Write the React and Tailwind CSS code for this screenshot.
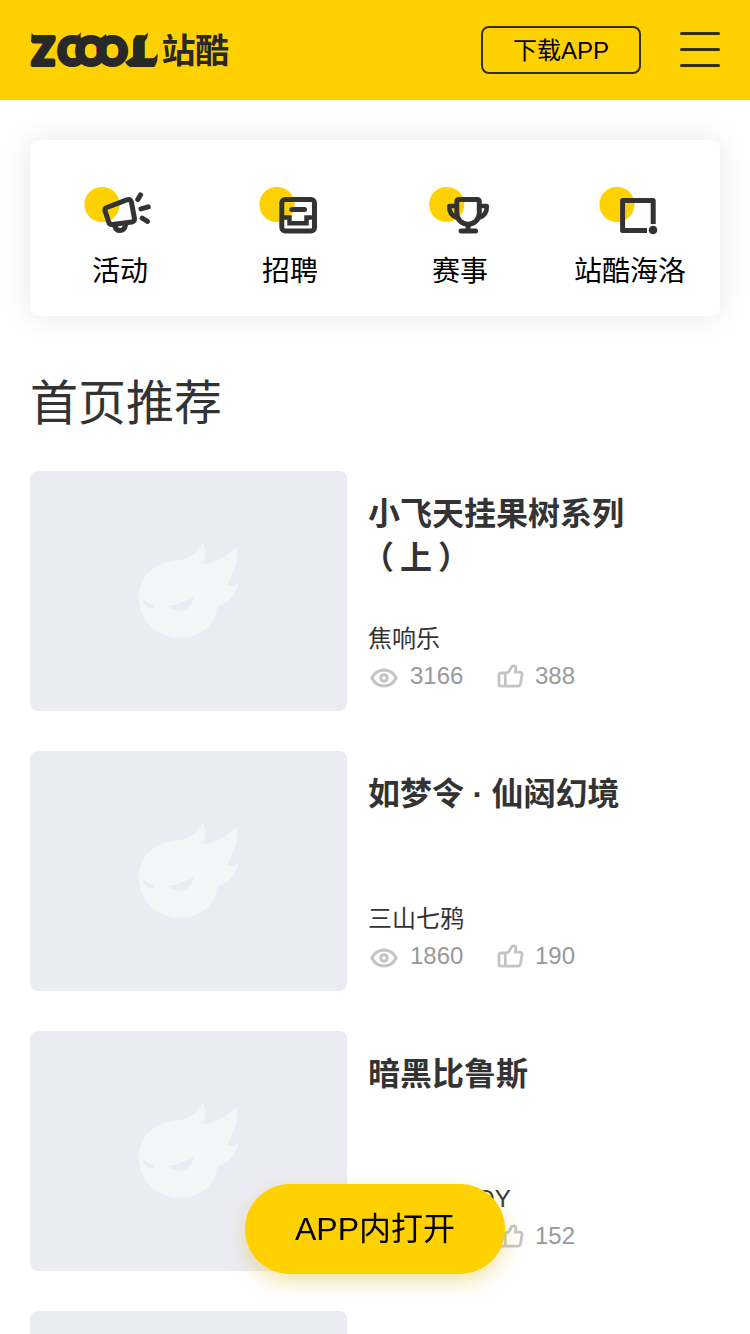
const navItems = [
    { name: '活动', icon: ActivityIcon },
    { name: '招聘', icon: JobsIcon },
    { name: '赛事', icon: TrophyIcon },
    { name: '站酷海洛', icon: HelloRfIcon },
]

const works = [
    { id: 1, title: '小飞天挂果树系列', suffix: '上', author: '焦响乐', views: 3166, likes: 388 },
    { id: 2, title: '如梦令 · 仙闼幻境', author: '三山七鸦', views: 1860, likes: 190 },
    { id: 3, title: '暗黑比鲁斯', author: 'BLACK_BOY', views: 1204, likes: 152 },
    { id: 4, title: '', author: '', views: 0, likes: 0 },
]

function Logo() {
    return (
        <svg className="w-[200px] h-10 overflow-visible" viewBox="30 30 200 40" fill="#282828" role="img" aria-label="ZCOOL 站酷">
            <text
                x="43.3 70 90.8 112.3 144"
                y="65"
                fontFamily="Lato, sans-serif"
                fontWeight="900"
                fontSize="37"
                textAnchor="middle"
                stroke="#282828"
                strokeWidth="4"
                strokeLinejoin="round"
            >
                ZCOOL
            </text>
            {/* little horns on the letters */}
            <path d="M31 42 L31.7 32.5 Q33 36.5 39 37 L39 41Z M70 36.5 Q78.5 37 80.7 32.3 Q81.5 38 77 43.5Z M98 39 Q103 37 106 34 L107 38 L101 42Z M133 42 Q133 36.5 138 36.5 Q145.5 37 147.7 32.3 Q148.5 39 144 41.5 L143 50 L133 60Z M148 59.5 Q156 58.5 157.5 53 Q158.5 62 154 67 L130 67 Q127 66 125 62 L134 56Z" />
            <text x="161.5 195" y="63" fontSize="34" fontWeight="700" fontFamily="'Noto Sans CJK SC', sans-serif">站酷</text>
        </svg>
    )
}

function ActivityIcon() {
    return (
        <svg className="w-20 h-[60px]" viewBox="0 0 80 60" fill="none" stroke="#333" strokeWidth="5" strokeLinecap="round" strokeLinejoin="round">
            <circle cx="22" cy="24.5" r="17.6" fill="#ffd100" stroke="none" />
            <path d="M26.8 27.5 L46.8 19.8 Q50.3 18.7 51.4 22 L54.4 38 Q55 41.4 51.8 42 L32.5 44.5 Q29.5 44.8 28.7 42 L25.1 31 Q24.4 28.5 26.8 27.5Z" />
            <path d="M34.8 46 Q36 50.5 40 50.5 Q44.5 50.5 45.7 44.5" />
            <path d="M57.8 19.6 L60.6 14.8 M61 28.9 L68.3 26.9 M62.2 38.2 L67.4 41.4" />
        </svg>
    )
}

function JobsIcon() {
    return (
        <svg className="w-20 h-[60px]" viewBox="0 0 80 60" fill="none" stroke="#333" strokeWidth="5" strokeLinecap="round" strokeLinejoin="round">
            <circle cx="27" cy="24.5" r="17.6" fill="#ffd100" stroke="none" />
            <rect x="31.8" y="19.6" width="32.7" height="31.4" rx="3.5" />
            <path d="M41.8 29.4 H54.5" />
            <path d="M33 37.5 H39.5 V43.3 H56.5 V37.5 H63" strokeWidth="4.5" strokeLinejoin="miter" />
        </svg>
    )
}

function TrophyIcon() {
    return (
        <svg className="w-20 h-[60px]" viewBox="0 0 80 60" fill="none" stroke="#333" strokeWidth="5" strokeLinecap="round" strokeLinejoin="round">
            <circle cx="26.7" cy="24.5" r="17.6" fill="#ffd100" stroke="none" />
            <g transform="translate(-6.7 0)">
                <path d="M43.5 22 Q43.5 19.5 46 19.5 H63.5 Q66 19.5 66 22 V33 C66 39.5 61 44.3 54.8 44.3 C48.5 44.3 43.5 39.5 43.5 33Z" />
                <path d="M42 26 H36 Q35.5 35 44 38 M67.5 26 H73.5 Q74 35 65.5 38" strokeWidth="4.5" />
                <path d="M54.8 45 V50 M47.8 51 H62.3" />
            </g>
        </svg>
    )
}

function HelloRfIcon() {
    return (
        <svg className="w-20 h-[60px]" viewBox="0 0 80 60" fill="none" stroke="#333" strokeWidth="5" strokeLinejoin="round">
            <circle cx="27" cy="24.5" r="17.6" fill="#ffd100" stroke="none" />
            <path d="M57 50.6 H32.6 V20.5 H63.2 V44" />
            <circle cx="63" cy="50" r="4.3" fill="#333" stroke="none" />
        </svg>
    )
}

function FlameIcon() {
    return (
        <svg className="w-[102px] h-[97px]" viewBox="55 40 306 291">
            <path
                fill="#f4f5f7"
                d="M57 205 C57 142 105 98 185 93 C220 86 239 62 250 41 C261 60 260 84 250 107 C292 101 325 83 353 53 C356 95 344 136 320 170 C334 173 345 171 357 164 C350 198 329 222 294 231 C286 292 242 327 181 327 C108 327 57 273 57 205Z"
            />
            <path fill="#ebebf4" d="M70 212 Q87 228 107 233 Q101 240 92 239 Q75 234 70 212Z M143 232 Q184 226 223 206 Q215 246 178 246 Q157 246 143 232Z" />
        </svg>
    )
}

function EyeIcon() {
    return (
        <svg className="w-7 h-5" viewBox="0 0 28 20" fill="none" stroke="#c4c4c4" strokeWidth="3" strokeLinejoin="round">
            <path d="M1.9 10 C4.5 5 8.8 1.9 14 1.9 C19.2 1.9 23.5 5 26.1 10 C23.5 15 19.2 18.1 14 18.1 C8.8 18.1 4.5 15 1.9 10Z" />
            <circle cx="14" cy="10" r="3.3" />
        </svg>
    )
}

function LikeIcon() {
    return (
        <svg className="w-[27px] h-6" viewBox="0 0 27 24" fill="none" stroke="#c4c4c4" strokeWidth="2.8" strokeLinejoin="round">
            <path d="M8.3 9 H4 Q2 9 2 11 V20 Q2 22.2 4 22.2 H20.5 Q22.8 22.2 23.4 20 L25 11 Q25.3 8.2 22.6 8.2 H18.3 L18.9 4.5 Q18.9 1.8 16.4 1.8 Q14.9 1.8 14.2 3.4 L12.6 6.6 Q11.3 9 8.3 9 V22" />
        </svg>
    )
}

const Header = () => (
    <header className="h-[100px] px-[30px] bg-[#ffd100] flex items-center justify-between">
        <Logo />
        <div className="flex items-center gap-[39px]">
            <button className="w-40 h-12 pt-0.5 border-2 border-[#333008] rounded-lg text-2xl leading-none text-black">下载APP</button>
            <button className="w-10 -mt-0.5 flex flex-col gap-[13px]" aria-label="菜单">
                <span className="h-[3px] rounded-full bg-[#333008]" />
                <span className="h-[3px] rounded-full bg-[#333008]" />
                <span className="h-[3px] rounded-full bg-[#333008]" />
            </button>
        </div>
    </header>
)

const WorkItem = ({ work }) => (
    <li className="flex gap-[21px] h-60">
        <div className="w-[317px] h-[239.5px] shrink-0 rounded-lg bg-[#ebebf4] flex items-center justify-center">
            <FlameIcon />
        </div>
        {work.title && (
            <div className="flex-1 flex flex-col pt-[21px]">
                <h3 className="h-[129px] text-[32px] leading-[44px] [word-spacing:-0.5px] font-bold text-[#333]">
                    {work.title}
                    {work.suffix && (
                        <span className="flex h-[44px]">
                            <span className="-ml-1.5 mr-1.5">（</span>
                            {work.suffix}
                            <span className="ml-1.5">）</span>
                        </span>
                    )}
                </h3>
                <p className="h-8 pt-0.5 text-2xl leading-8 text-[#333]">{work.author}</p>
                <div className="mt-[5px] h-9 flex items-center text-2xl leading-9 text-[#999]">
                    <span className="w-[129px] pl-0.5 flex items-center gap-3">
                        <span className="pt-1"><EyeIcon /></span>
                        {work.views}
                    </span>
                    <span className="flex items-center gap-[11px]">
                        <LikeIcon />
                        {work.likes}
                    </span>
                </div>
            </div>
        )}
    </li>
)

const App = () => {
    return (
        <div className="w-[750px] h-[1334px] overflow-hidden bg-white font-['Liberation_Sans','Noto_Sans_CJK_SC',sans-serif]">
            <Header />

            <nav className="mt-10 mx-[30px] h-44 px-[5px] pt-10 rounded-lg bg-white shadow-[0_0_30px_rgba(0,0,0,0.1)] flex">
                {navItems.map((item) => {
                    const Icon = item.icon
                    return (
                        <a key={item.name} className="w-[170px] flex flex-col items-center">
                            <Icon />
                            <span className="mt-3 text-[28px] leading-10 text-black">{item.name}</span>
                        </a>
                    )
                })}
            </nav>

            <main className="px-[30px]">
                <h2 className="mt-[54px] h-[101px] text-5xl leading-[68px] text-[#333]">首页推荐</h2>
                <ul className="flex flex-col gap-10">
                    {works.map((work) => (
                        <WorkItem key={work.id} work={work} />
                    ))}
                </ul>
            </main>

            {/* Floating open-in-app button */}
            <button className="fixed left-[245px] top-[1184px] w-[260px] h-[90px] rounded-full bg-[#ffd100] text-[32px] text-black shadow-[0_8px_20px_rgba(221,190,40,0.4)]">
                APP内打开
            </button>
        </div>
    )
}

export default App
